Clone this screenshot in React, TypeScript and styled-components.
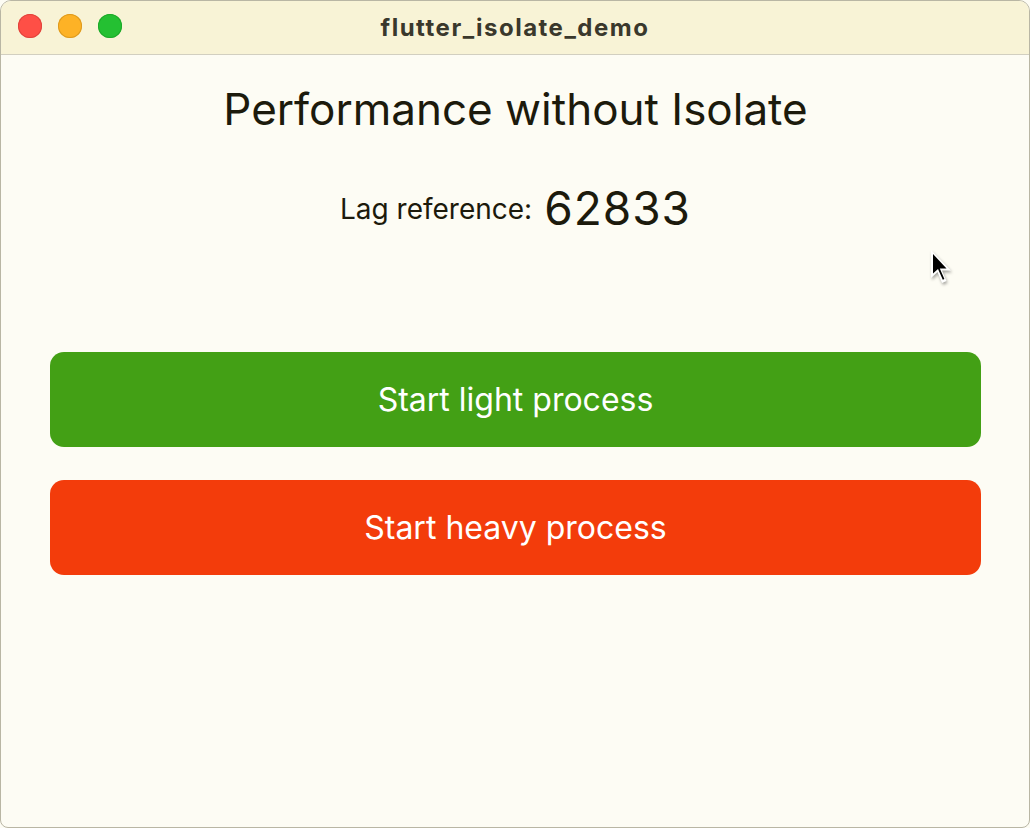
import React from 'react'
import styled, { createGlobalStyle } from 'styled-components'

const GlobalStyle = createGlobalStyle`
  html, body {
    margin: 0;
    padding: 0;
    width: 100%;
    height: 100%;
    background: #fdfcf4;
    font-family: Inter, "Noto Sans", "Liberation Sans", sans-serif;
  }
  #root {
    height: 100%;
  }
`

export default function App() {
  return (
    <>
      <GlobalStyle />
      <Window>
        <TitleBar>
          <Lights>
            <Light color="#fe4f46" edge="#e0443c" />
            <Light color="#fdb226" edge="#dd9a1f" />
            <Light color="#24c032" edge="#1ea82a" />
          </Lights>
          <Title>flutter_isolate_demo</Title>
        </TitleBar>
        <Content>
          <Heading>Performance without Isolate</Heading>
          <LagRow>
            <LagLabel>Lag reference:</LagLabel>
            <LagValue>62833</LagValue>
          </LagRow>
          <Buttons>
            <ActionButton tone="#43a015">Start light process</ActionButton>
            <ActionButton tone="#f33c0b">Start heavy process</ActionButton>
          </Buttons>
          <Cursor width="26" height="40" viewBox="0 0 26 40">
            <path d="M3 2 L3 30 L9.5 24 L14 35 L18.5 33 L14 22.5 L23 22.5 Z" fill="#fff" />
            <path d="M5 6 L5 25.5 L10 21 L14.8 31.8 L16.4 31.1 L11.8 20.6 L18.5 20.6 Z" fill="#000" />
          </Cursor>
        </Content>
      </Window>
    </>
  )
}

const Window = styled.div`
  box-sizing: border-box;
  height: 100vh;
  display: flex;
  flex-direction: column;
  border: 1px solid #b9b6a4;
  border-radius: 11px 11px 8px 8px;
  overflow: hidden;
  background: #fdfcf4;
`

const TitleBar = styled.div`
  position: relative;
  height: 53px;
  flex: none;
  display: flex;
  align-items: center;
  justify-content: center;
  background: #f8f3d6;
  border-bottom: 1px solid #d2cfc0;
`

const Lights = styled.div`
  position: absolute;
  left: 17px;
  top: 13px;
  display: flex;
  gap: 16px;
`

const Light = styled.span<{ color: string; edge: string }>`
  width: 24px;
  height: 24px;
  border-radius: 50%;
  background: ${p => p.color};
  box-shadow: inset 0 0 0 1px ${p => p.edge};
`

const Title = styled.div`
  font-size: 24px;
  font-weight: 700;
  color: #3a382c;
  letter-spacing: 1.5px;
`

const Content = styled.div`
  position: relative;
  flex: 1;
  display: flex;
  flex-direction: column;
  align-items: center;
  padding: 26px 48px 0 49px;
`

const Heading = styled.h1`
  margin: 0;
  font-size: 44px;
  font-weight: 400;
  line-height: 56px;
  color: #1c1a0c;
`

const LagRow = styled.div`
  margin-top: 43px;
  display: flex;
  align-items: center;
  gap: 12px;
  color: #1c1a0c;
`

const LagLabel = styled.span`
  font-size: 28px;
  margin-top: 1px;
`

const LagValue = styled.span`
  font-size: 46px;
  line-height: 56px;
  letter-spacing: 1px;
`

const Buttons = styled.div`
  align-self: stretch;
  margin-top: 116px;
  display: flex;
  flex-direction: column;
  gap: 33px;
`

const ActionButton = styled.button<{ tone: string }>`
  height: 95px;
  border: none;
  border-radius: 14px;
  background: ${p => p.tone};
  color: #ffffff;
  font-family: inherit;
  font-size: 32px;
  font-weight: 400;
  cursor: pointer;
`

const Cursor = styled.svg`
  position: absolute;
  left: 927px;
  top: 193px;
  filter: drop-shadow(1px 2px 1.5px rgba(0, 0, 0, 0.35));
`
